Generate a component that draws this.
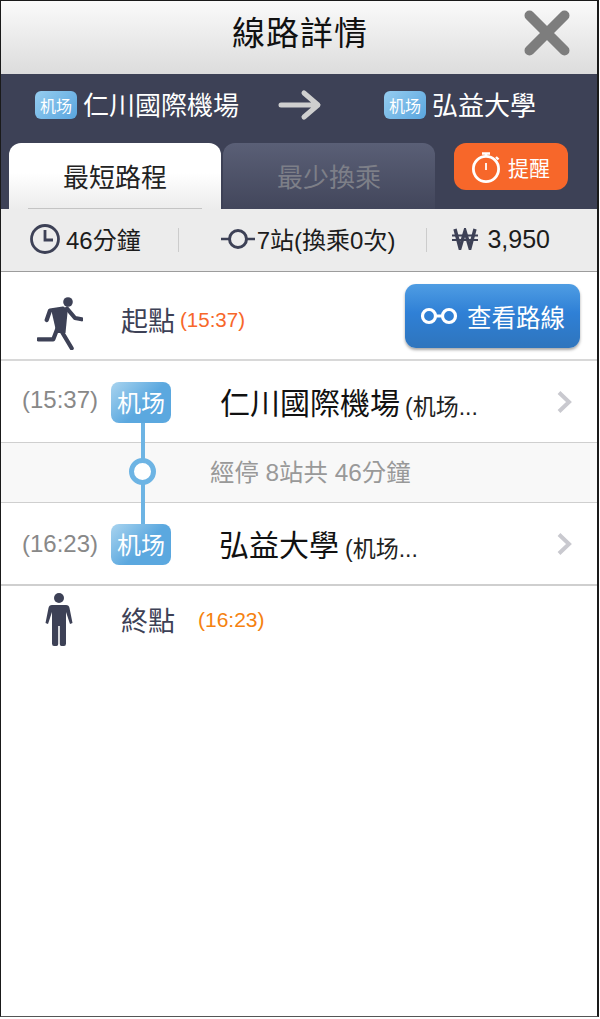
<div class="frame">
  <header class="top">
    <h1>線路詳情</h1>
    <svg class="close" viewBox="0 0 46 46" width="46" height="46"><path d="M5.500 5.500L40.500 40.500M40.500 5.500L5.500 40.500" stroke="#7d7d7d" stroke-width="10" stroke-linecap="round"/></svg>
  </header>

  <section class="dark">
    <div class="route">
      <div class="stop first"><span class="chip">机场</span><span class="place">仁川國際機場</span></div>
      <svg class="arrow" viewBox="0 0 44 32" width="44" height="32"><path d="M3 16H39M26 4L40 16L26 28" fill="none" stroke="#cfcfcf" stroke-width="5" stroke-linecap="round" stroke-linejoin="round"/></svg>
      <div class="stop last"><span class="chip">机场</span><span class="place">弘益大學</span></div>
    </div>
    <div class="tabs">
      <div class="tab active"><span>最短路程</span><i></i></div>
      <div class="tab idle"><span>最少換乘</span></div>
      <button class="alarm">
        <svg viewBox="0 0 30 34" width="30" height="34"><g fill="none" stroke="#fff"><circle cx="14" cy="19" r="12.600" stroke-width="2.800"/><path d="M10 3.500H18M14 3.500V7M24 7L26.500 9.500" stroke-width="2.400"/><path d="M14 13V20" stroke-width="1.800"/></g></svg>
        <span>提醒</span>
      </button>
    </div>
  </section>

  <section class="stats">
    <div class="stat a">
      <svg viewBox="0 0 30 30" width="30" height="30"><circle cx="15" cy="15" r="13.500" fill="none" stroke="#3d4156" stroke-width="2.800"/><path d="M15 6V16H23" fill="none" stroke="#3d4156" stroke-width="2.800"/></svg>
      <span>46分鐘</span>
    </div>
    <b class="sep"></b>
    <div class="stat b">
      <svg viewBox="0 0 34 20" width="34" height="20"><path d="M0 10H8M26 10H34" stroke="#3d4156" stroke-width="2.400"/><circle cx="17" cy="10" r="8.500" fill="none" stroke="#3d4156" stroke-width="3"/></svg>
      <span>7站(換乘0次)</span>
    </div>
    <b class="sep"></b>
    <div class="stat c">
      <svg viewBox="0 0 26 22" width="26" height="22"><path d="M3 1L8 20L13 3L18 20L23 1" fill="none" stroke="#3d4156" stroke-width="3.400"/><path d="M0 7.500H26M0 12H26" fill="none" stroke="#3d4156" stroke-width="2.200"/></svg>
      <span>3,950</span>
    </div>
  </section>

  <section class="start">
    <svg class="runner" viewBox="0 0 46 53" width="46" height="53">
      <circle cx="31" cy="5" r="4.800" fill="#3d4156"/>
      <path d="M14 12L31 10.500L28.500 36H19.500Z" fill="#3d4156"/>
      <path d="M9.700 23L13 13.500L26 11.500M30 11.500L38 21L44.700 22.300M21 30L16.300 42.300H1.300M25 35L34.700 51.300" fill="none" stroke="#3d4156" stroke-width="4.200" stroke-linecap="round" stroke-linejoin="round"/>
    </svg>
    <span class="lbl">起點</span><span class="t1">(15:37)</span>
    <button class="view">
      <svg viewBox="0 0 38 18" width="38" height="18"><circle cx="9" cy="9" r="6.500" fill="none" stroke="#fff" stroke-width="3.200"/><circle cx="29" cy="9" r="6.500" fill="none" stroke="#fff" stroke-width="3.200"/><path d="M15 9H23" stroke="#fff" stroke-width="3"/></svg>
      <span>查看路線</span>
    </button>
  </section>

  <section class="station one">
    <span class="time">(15:37)</span>
    <span class="badge">机场</span>
    <span class="name">仁川國際機場</span><span class="sub">(机场...</span>
    <svg class="chev" viewBox="0 0 16 24" width="16" height="24"><path d="M3 2.500L13 12L3 21.500" fill="none" stroke="#c9c9cf" stroke-width="4"/></svg>
  </section>

  <section class="via">
    <span class="node"></span>
    <span class="via-text">經停 8站共 46分鐘</span>
  </section>

  <section class="station two">
    <span class="time">(16:23)</span>
    <span class="badge">机场</span>
    <span class="name">弘益大學</span><span class="sub">(机场...</span>
    <svg class="chev" viewBox="0 0 16 24" width="16" height="24"><path d="M3 2.500L13 12L3 21.500" fill="none" stroke="#c9c9cf" stroke-width="4"/></svg>
  </section>

  <section class="end">
    <svg class="person" viewBox="0 0 28 53" width="28" height="53"><circle cx="14" cy="5" r="5" fill="#3d4156"/><path d="M7 12H21Q24 12 24.500 15L27.500 30L25 31L21 19V50.500Q21 53 19 53H16.500Q14.800 53 14.800 51V33H13.200V51Q13.200 53 11.500 53H9Q7 53 7 50.500V19L3 31L.5 30L3.500 15Q4 12 7 12Z" fill="#3d4156"/></svg>
    <span class="lbl">終點</span><span class="t2">(16:23)</span>
  </section>
</div>

<style>
  :global(body) { margin: 0; background: #fff; }
  .frame {
    box-sizing: border-box;
    width: 599px;
    height: 1017px;
    border: 1px solid #1a1a1a;
    border-right-width: 2px;
    border-bottom: 1px solid #555;
    background: #fff;
    font-family: "Liberation Sans", "Noto Sans CJK TC", sans-serif;
    overflow: hidden;
  }
  .top {
    height: 73px;
    background: linear-gradient(#fafafa, #dcdcdc);
    display: flex;
    align-items: center;
    justify-content: center;
    position: relative;
  }
  h1 { margin: 0 0 14px 2px; font-size: 33px; font-weight: 400; color: #111; letter-spacing: 1px; }
  .close { position: absolute; right: 27px; top: 9px; }
  .dark { background: #3d4156; height: 135px; display: flex; flex-direction: column; }
  .route { height: 69px; display: flex; align-items: center; color: #fff; font-size: 26px; box-sizing: border-box; padding-bottom: 8px; }
  .place { margin: -2px 0 0 -1px; }
  .stop { display: flex; align-items: center; gap: 7px; }
  .first { margin-left: 34px; }
  .arrow { margin-left: 39px; }
  .last { margin-left: 62px; }
  .chip {
    width: 42px; height: 28px;
    border-radius: 6px;
    background: linear-gradient(135deg, #96cdf0, #59a5de);
    font-size: 16px;
    display: flex; align-items: center; justify-content: center;
  }
  .tabs { display: flex; align-items: flex-start; height: 66px; }
  .tab {
    height: 66px; box-sizing: border-box;
    border-radius: 12px 12px 0 0;
    font-size: 26px;
    display: flex; justify-content: center;
    padding-top: 14px;
    position: relative;
  }
  .active { margin-left: 8px; width: 212px; background: linear-gradient(#fff 45%, #ececec); color: #222; }
  .active i { position: absolute; left: 19px; right: 19px; bottom: 0; height: 1px; background: #c4c4c4; }
  .idle { margin-left: 2px; width: 212px; background: linear-gradient(#5a5f76, #42465b); color: #7d7f88; }
  .alarm {
    margin-left: 19px; width: 114px; height: 47px;
    border: 0; border-radius: 12px; background: #f7672a; color: #fff;
    font: inherit; font-size: 21px;
    display: flex; align-items: center; justify-content: center; gap: 6px; padding: 0;
  }
  .stats {
    height: 63px; box-sizing: border-box;
    background: #ececec;
    border-bottom: 1px solid #9c9c9c;
    display: flex; align-items: center;
    font-size: 24px; color: #1c1c1c;
  }
  .stat { display: flex; align-items: center; }
  .stat span { margin-top: -3px; }
  .stat svg { margin-top: -2px; }
  .c span { margin-top: -1px; }
  .a { margin-left: 29px; gap: 6px; }
  .sep { width: 1px; height: 24px; background: #ccc; }
  .a + .sep { margin-left: 37px; }
  .b { margin-left: 42px; gap: 2px; }
  .b + .sep { margin-left: 31px; }
  .c { margin-left: 25px; gap: 9px; font-size: 25px; }
  .start {
    height: 89px; box-sizing: border-box;
    border-bottom: 2px solid #d8d8d8;
    display: flex; align-items: center;
    position: relative;
  }
  .runner { margin-left: 36px; align-self: flex-start; margin-top: 25px; }
  .lbl { font-size: 27px; color: #3d4156; margin: 7px 0 0 38px; }
  .t1 { font-size: 20.500px; color: #f7672a; margin: 9px 0 0 5px; }
  .view {
    margin-left: auto; margin-right: 17px; margin-top: 1px;
    width: 175px; height: 64px;
    border: 0; border-radius: 11px;
    background: linear-gradient(#4f9de3, #2f80d6 45%, #2f75bd);
    box-shadow: 0 2px 3px rgba(0,0,0,.35);
    color: #fff; font: inherit; font-size: 24.500px;
    display: flex; align-items: center; justify-content: center; gap: 9px; padding: 0;
  }
  .station { height: 82px; box-sizing: border-box; display: flex; align-items: center; position: relative; border-bottom: 1px solid #cfcfcf; }
  .two { border-bottom-width: 2px; height: 83px; }
  .time { position: absolute; left: 21px; top: 25px; font-size: 24px; color: #888; }
  .two .time { top: 27px; }
  .badge {
    position: absolute; left: 110px; top: 21px;
    width: 60px; height: 41px; border-radius: 8px; box-sizing: border-box;
    padding-bottom: 3px;
    background: linear-gradient(135deg, #a9d4ef, #5ba8df 55%);
    color: #fff; font-size: 24px;
    display: flex; align-items: center; justify-content: center;
    z-index: 1;
  }
  .one .badge::after, .two .badge::before { content: ""; position: absolute; left: 30px; width: 4px; background: #6db4e4; }
  .one .badge::after { top: 41px; height: 20px; }
  .two .badge::before { top: -22px; height: 22px; }
  .name { margin: -2px 0 0 219px; font-size: 30px; color: #111; }
  .two .name { margin-left: 218px; }
  .sub { font-size: 23px; color: #222; margin: 6px 0 0 5px; }
  .two .sub { margin-left: 6px; }
  .chev { position: absolute; right: 25px; top: 29px; }
  .via {
    height: 60px; box-sizing: border-box;
    background: #f8f8f8;
    border-bottom: 1px solid #cfcfcf;
    display: flex; align-items: center;
    padding-left: 209px;
    font-size: 24.400px; color: #999;
    position: relative;
  }
  .via-text { margin-top: -4px; }
  .via::before { content: ""; position: absolute; left: 140px; top: 0; bottom: -1px; width: 4px; background: #6db4e4; }
  .node {
    position: absolute; left: 128px; top: 15px;
    width: 27px; height: 27px; box-sizing: border-box;
    border: 5px solid #6db4e4; border-radius: 50%; background: #fff;
  }
  .end { height: 70px; display: flex; align-items: center; position: relative; }
  .person { margin-left: 44px; margin-top: -3px; }
  .end .lbl { margin: -4px 0 0 48px; }
  .t2 { font-size: 21px; color: #f5820f; margin: -2px 0 0 23px; }
</style>
